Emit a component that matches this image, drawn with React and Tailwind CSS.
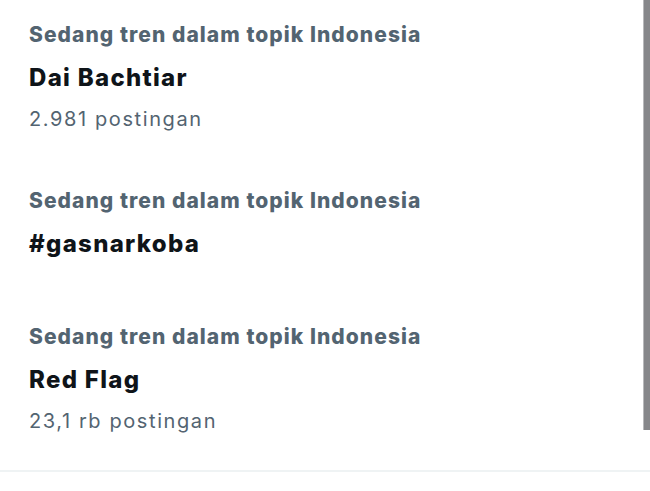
const trends = [
  { title: "Dai Bachtiar", posts: "2.981 postingan", pad: "pt-[21px] pb-[27px]" },
  { title: "#gasnarkoba", posts: null, pad: "pt-[27px] pb-[32px]" },
  { title: "Red Flag", posts: "23,1 rb postingan", pad: "pt-[32px] pb-[34px]" },
];

function TrendItem({ title, posts, pad }) {
  return (
    <div className={`px-[29px] ${pad}`}>
      <div className="text-[21px] leading-[28px] font-extrabold tracking-[1.05px] text-[#536471]">
        Sedang tren dalam topik Indonesia
      </div>
      <div className="mt-[14px] text-[24px] leading-[30px] font-extrabold tracking-[1.3px] text-[#0f1419]">
        {title}
      </div>
      {posts && (
        <div className="mt-[12px] text-[20px] leading-[28px] tracking-[1.6px] text-[#536471]">
          {posts}
        </div>
      )}
    </div>
  );
}

export default function App() {
  return (
    <div className="w-[650px] h-[491px] bg-white overflow-hidden font-['Inter',sans-serif]">
      <div className="flex h-[470px]">
        <div className="flex-1">
          {trends.map((t) => (
            <TrendItem key={t.title} {...t} />
          ))}
        </div>
        {/* scrollbar */}
        <div className="w-[7px] flex flex-col">
          <div className="h-[430px] bg-[#86878a] border-l border-[#b8b9bb]" />
        </div>
      </div>
      <div className="h-[2px] bg-[#eff3f4]" />
    </div>
  );
}
